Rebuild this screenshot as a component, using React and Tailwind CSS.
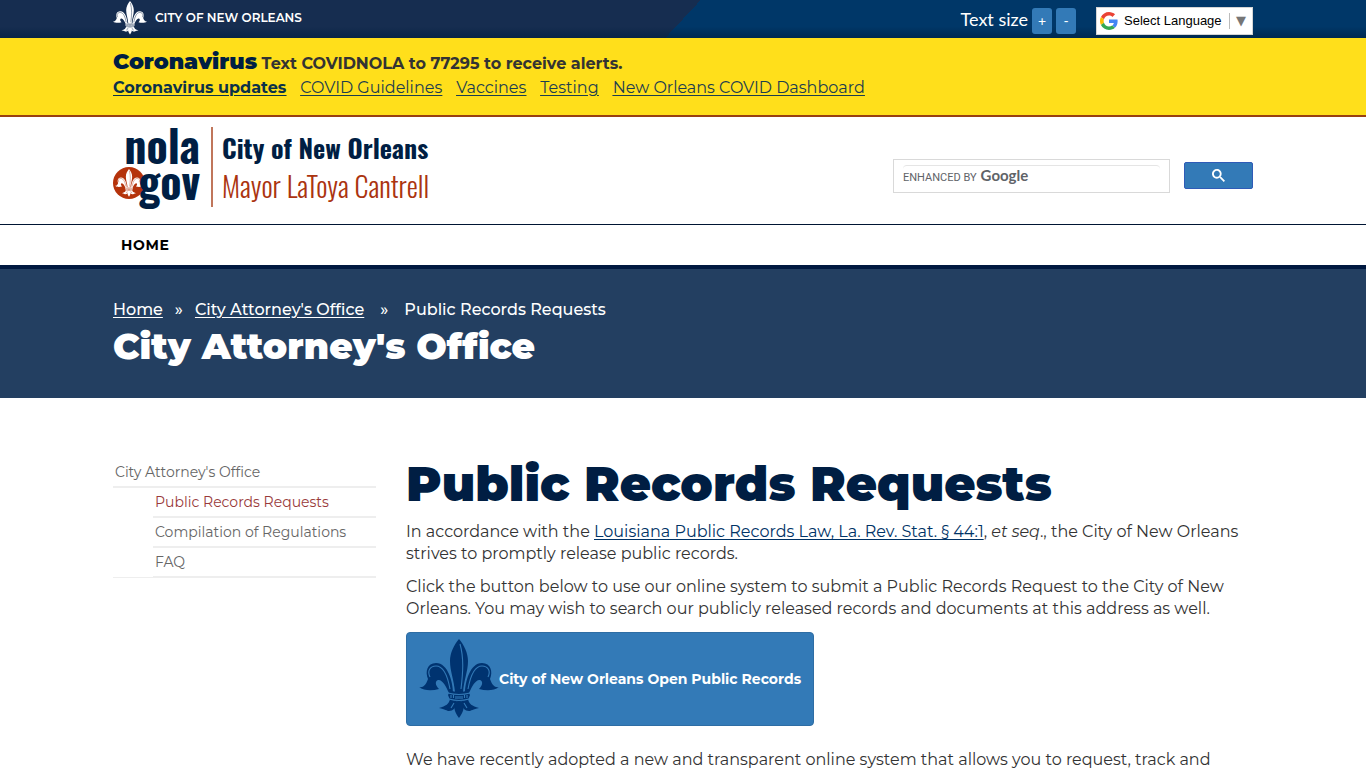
import { useState } from 'react';

const alertLinks = ['COVID Guidelines', 'Vaccines', 'Testing', 'New Orleans COVID Dashboard'];

const sideLinks = [
  { label: 'Public Records Requests', active: true },
  { label: 'Compilation of Regulations' },
  { label: 'FAQ' },
];

const PETAL = 'M34 54C34 43 29 24 17 24 8 24 6 33 9 40 7 46 4 49 0 48c5 4 13 4 20 2-4-4-4-8-1-9 4-1 8 6 11 13Z';
const FOOT = 'M31 60c-1 5-4 7-11 9 6 1 8 3 10 3 4 0 7-3 7-8v-3Z';

function FleurDeLis({ className, line }) {
  return (
    <svg viewBox="0 0 80 80" className={className} fill="currentColor" aria-hidden="true">
      <path d="M40 0C35 6 31 14 31 22c0 10 4 19 5 31h8c1-12 5-21 5-31C49 14 45 6 40 0Z" />
      <path d={PETAL} />
      <path d={FOOT} />
      <g transform="translate(80 0) scale(-1 1)">
        <path d={PETAL} />
        <path d={FOOT} />
      </g>
      <path d="M30 51q10 4 20 0v3l1 2-2 5q-9 3-18 0l-2-5 1-2ZM36 62h8c2 6 0 12-4 17-4-5-6-11-4-17Z" />
      <g fill="none" stroke={line} strokeWidth="1.1">
        <path d="M41 5c4 14 3 28 1 45M11 38c-3-6 0-11 6-11 8 0 12 12 14 23M69 38c3-6 0-11-6-11-8 0-12 12-14 23" />
        <path d="M29 54q11 3 22 0M30 60q10 3 20 0M35 64l-3 5M45 64l3 5" />
        <path d="M32 56v3M34.500 56v3M37 57v3M39 57v3M41 57v3M43 57v3M45.500 56v3M48 56v3" />
      </g>
    </svg>
  );
}

function GoogleG() {
  return (
    <svg viewBox="0 0 48 48" className="size-[18px]" aria-hidden="true">
      <path fill="#EA4335" d="M24 9.5c3.54 0 6.71 1.22 9.21 3.6l6.85-6.85C35.9 2.38 30.47 0 24 0 14.62 0 6.51 5.38 2.56 13.22l7.98 6.19C12.43 13.72 17.74 9.5 24 9.5z" />
      <path fill="#4285F4" d="M46.98 24.55c0-1.57-.15-3.09-.38-4.55H24v9.02h12.94c-.58 2.96-2.26 5.48-4.78 7.18l7.73 6c4.51-4.18 7.09-10.36 7.09-17.65z" />
      <path fill="#FBBC05" d="M10.53 28.59a14.5 14.5 0 0 1 0-9.18l-7.98-6.19a24 24 0 0 0 0 21.56z" />
      <path fill="#34A853" d="M24 48c6.48 0 11.93-2.13 15.89-5.81l-7.73-6c-2.15 1.45-4.92 2.3-8.16 2.3-6.26 0-11.57-4.22-13.47-9.91l-7.98 6.19C6.51 42.62 14.62 48 24 48z" />
    </svg>
  );
}

function TopBar() {
  return (
    <div className="bg-[linear-gradient(to_bottom,transparent_70%,#00203f99),linear-gradient(133deg,#162d50_50%,#003768_50%)]">
      <div className="mx-auto flex h-[38px] max-w-[1140px] items-center justify-between text-white">
        <a href="#" className="flex items-center gap-2 pb-[2px] text-xs font-semibold">
          <FleurDeLis className="size-[34px]" line="#162d50" />
          CITY OF NEW ORLEANS
        </a>
        <div className="flex items-center gap-1 pt-[3px]">
          <span className="pb-1 font-[Lato] text-lg leading-5">Text size</span>
          <button type="button" className="h-[26px] w-5 rounded-[3px] bg-[#337ab7] font-[Lato] text-sm">+</button>
          <button type="button" className="h-[26px] w-5 rounded-[3px] bg-[#337ab7] font-[Lato] text-sm">-</button>
          <div className="relative ml-4 flex h-7 w-[157px] items-center gap-[6px] border border-[#d5d5d5] bg-white pl-[3px]">
            <GoogleG />
            <select aria-label="Select Language" className="h-full flex-1 appearance-none font-['Liberation_Sans',sans-serif] text-[13px] text-black">
              <option>Select Language</option>
              <option>Español</option>
              <option>Tiếng Việt</option>
            </select>
            <span className="pointer-events-none absolute right-[6px] border-l border-[#bbb] pl-[6px] font-['DejaVu_Sans'] text-[13px] leading-4 text-[#767676]">▼</span>
          </div>
        </div>
      </div>
    </div>
  );
}

function AlertBanner() {
  return (
    <section className="border-b-2 border-[#994010] bg-[#ffdf1b]">
      <div className="mx-auto h-[77px] max-w-[1140px] pt-3">
        <p className="text-base leading-[26px] font-bold text-[#333]">
          <strong className="text-[22px] leading-6 font-black text-[#001e43]">Coronavirus</strong> Text COVIDNOLA to 77295 to receive alerts.
        </p>
        <nav className="flex gap-[14px] text-base leading-[22px] text-[#1c3d4f] underline underline-offset-2">
          <a href="#" className="font-bold text-[#0b3149]">Coronavirus updates</a>
          {alertLinks.map(l => <a key={l} href="#">{l}</a>)}
        </nav>
      </div>
    </section>
  );
}

function Logo() {
  return (
    <a href="#" className="flex h-20 font-[Oswald,'Liberation_Sans_Narrow',sans-serif]">
      <div className="relative w-[100px] border-r-2 border-[#c0765b] pr-[11px] text-right text-[44px] leading-9 font-bold text-[#001e43]">
        <span className="absolute top-10 left-0 grid size-8 place-items-center rounded-full bg-[#b5330b] text-white">
          <FleurDeLis className="size-7" line="#b5330b" />
        </span>
        <div className="relative">nola</div>
        <div className="relative">gov</div>
      </div>
      <div className="pt-[2px] pl-[9px] leading-[38px]">
        <div className="text-[26px] font-bold text-[#001e43]">City of New Orleans</div>
        <div className="text-[28px] font-light text-[#ab3410]">Mayor LaToya Cantrell</div>
      </div>
    </a>
  );
}

function SearchForm() {
  const [query, setQuery] = useState('');

  return (
    <form className="flex items-center gap-[14px]" onSubmit={e => e.preventDefault()}>
      <div className="relative flex h-[34px] w-[277px] items-center border border-[#d9d9d9] px-[9px]">
        <input aria-label="Search" value={query} onChange={e => setQuery(e.target.value)}
          className="h-[22px] w-full rounded-sm border-t border-[#e5e5e5] text-sm outline-none" />
        {!query && (
          <span className="pointer-events-none absolute flex items-baseline gap-1 font-[Roboto] text-[11px] text-[#5f6368]">
            ENHANCED BY <b className="font-[Lato] text-[15px] leading-5">Google</b>
          </span>
        )}
      </div>
      <button type="submit" aria-label="Search" className="mb-[2px] grid h-[27px] w-[69px] place-items-center rounded-xs border border-[#2f5bb7] bg-[#337ab7] text-white">
        <svg viewBox="0 0 13 13" className="size-[13px]" fill="currentColor" aria-hidden="true">
          <path d="m4.8495 7.8226c0.82666 0 1.5262-0.29146 2.0985-0.87438 0.57232-0.58292 0.86378-1.2877 0.87438-2.1144 0.010599-0.82666-0.28086-1.5262-0.87438-2.0985-0.59352-0.57232-1.293-0.86378-2.0985-0.87438-0.8055-0.010599-1.5103 0.28086-2.1144 0.87438-0.60414 0.59352-0.8956 1.293-0.87438 2.0985 0.021197 0.8055 0.31266 1.5103 0.87438 2.1144 0.56172 0.60414 1.2665 0.8956 2.1144 0.87438zm4.4695 0.2115 3.681 3.6819-1.259 1.284-3.6817-3.7 0.0019784-0.69479-0.090043-0.098846c-0.87973 0.76087-1.92 1.1413-3.1207 1.1413-1.3553 0-2.5025-0.46363-3.4417-1.3909s-1.4088-2.0686-1.4088-3.4239c0-1.3553 0.4696-2.4966 1.4088-3.4239 0.9392-0.92727 2.0864-1.3969 3.4417-1.4088 1.3553-0.011889 2.4906 0.45771 3.406 1.4088 0.9154 0.95107 1.379 2.0924 1.3909 3.4239 0 1.2126-0.38043 2.2588-1.1413 3.1385l0.098834 0.090049z" />
        </svg>
      </button>
    </form>
  );
}

export default function App() {
  return (
    <div className="min-h-screen bg-white font-['Montserrat','Inter',sans-serif] text-[#333]">
      <TopBar />
      <AlertBanner />

      <header>
        <div className="mx-auto flex h-[107px] max-w-[1140px] items-start justify-between">
          <div className="pt-[10px]"><Logo /></div>
          <div className="pt-[42px]"><SearchForm /></div>
        </div>
        <nav className="border-t border-b-4 border-t-[#001533] border-b-[#001940]">
          <div className="mx-auto h-10 max-w-[1140px] px-2 text-sm leading-10 font-bold tracking-wider text-black">
            <a href="#">HOME</a>
          </div>
        </nav>
      </header>

      {/* Page banner */}
      <section className="bg-[#233f61] text-white">
        <div className="mx-auto h-[129px] max-w-[1140px] pt-7">
          <nav className="flex text-base leading-[26px] font-medium" aria-label="Breadcrumb">
            <a href="#" className="underline underline-offset-2">Home</a>
            <span className="px-3">»</span>
            <a href="#" className="underline underline-offset-2">City Attorney's Office</a>
            <span className="px-4">»</span>
            <span>Public Records Requests</span>
          </nav>
          <div className="text-4xl leading-[46px] font-black">City Attorney's Office</div>
        </div>
      </section>

      <main className="mx-auto flex max-w-[1140px] gap-[30px] pt-[59px]">
        <aside className="w-[263px] shrink-0 text-sm leading-7 text-[#666]">
          <ul>
            <li className="border-b border-[#eee]">
              <a href="#" className="block border-b-2 border-[#eee] px-[2px] pt-px">City Attorney's Office</a>
              <ul className="-mb-px pl-10">
                {sideLinks.map(l => (
                  <li key={l.label} className="border-b-2 border-[#eee] px-[2px]">
                    <a href="#" className={l.active ? 'text-[#993a3a]' : ''}>{l.label}</a>
                  </li>
                ))}
              </ul>
            </li>
          </ul>
        </aside>

        <article className="flex-1 text-base leading-[22px]">
          <h1 className="text-5xl leading-[54px] font-black text-[#001e43]">Public Records Requests</h1>
          <p className="mt-[10px]">
            In accordance with the <a href="#" className="text-[#003366] underline underline-offset-2">Louisiana Public Records Law, La. Rev. Stat. § 44:1</a>, <em>et seq</em>., the City of New Orleans<br />
            strives to promptly release public records.
          </p>
          <p className="mt-[11px]">
            Click the button below to use our online system to submit a Public Records Request to the City of New<br />
            Orleans. You may wish to search our publicly released records and documents at this address as well.
          </p>
          <a href="#" className="mt-3 inline-flex h-[94px] w-[408px] items-center rounded-[4px] border border-[#2e6da4] bg-[#337ab7] pl-3 text-sm font-bold text-white">
            <FleurDeLis className="size-20 text-[#003370]" line="#337ab7" />
            City of New Orleans Open Public Records
          </a>
          <p className="mt-[23px]">We have recently adopted a new and transparent online system that allows you to request, track and</p>
        </article>
      </main>
    </div>
  );
}
